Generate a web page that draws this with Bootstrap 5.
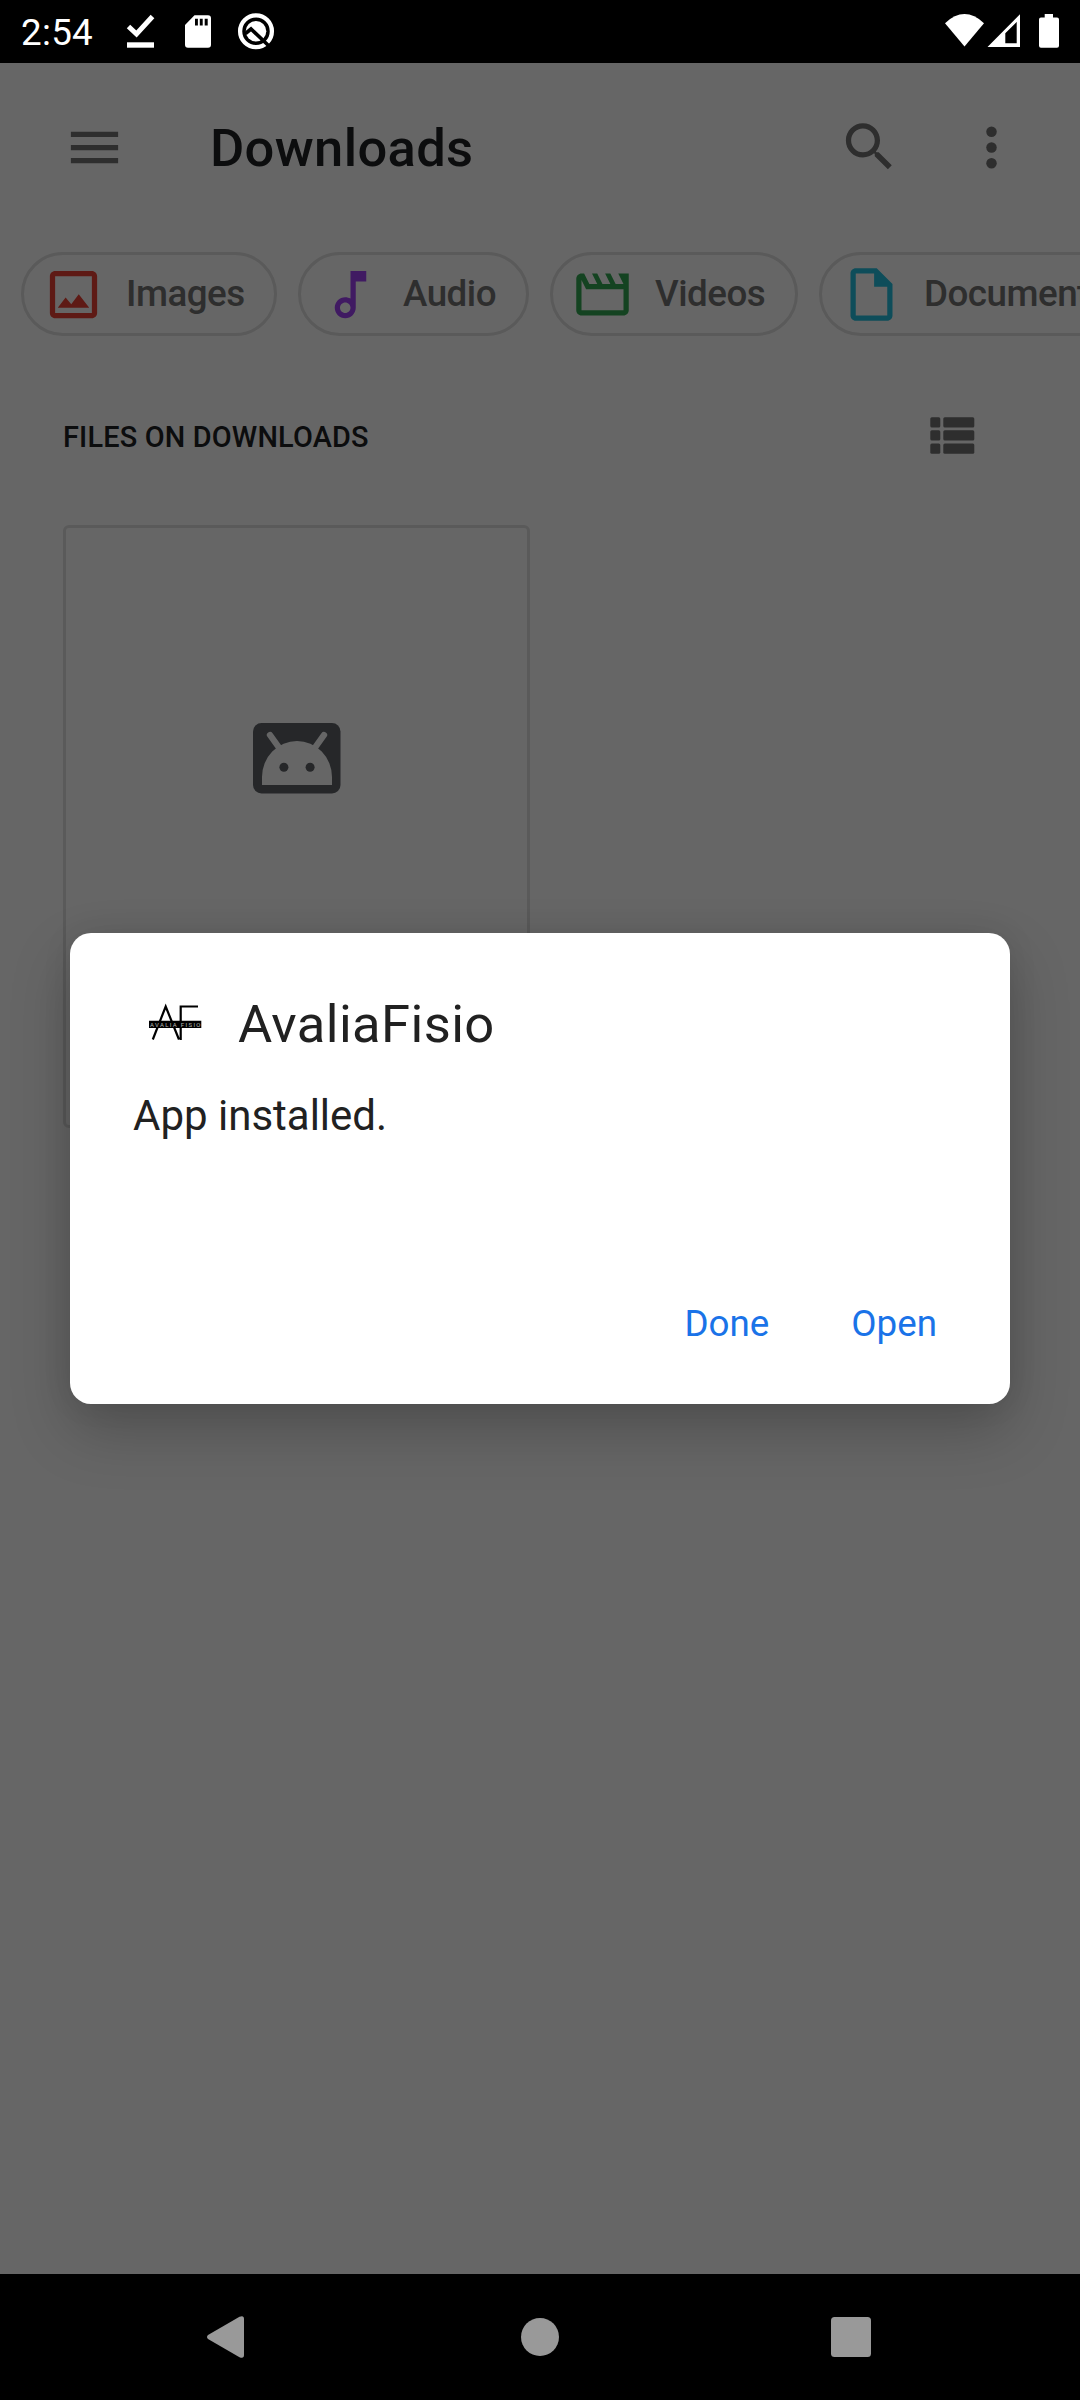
<!DOCTYPE html>
<html lang="en">
<head>
<meta charset="utf-8">
<meta name="viewport" content="width=device-width, initial-scale=1">
<title>Downloads</title>
<link href="https://cdn.jsdelivr.net/npm/bootstrap@5.3.0/dist/css/bootstrap.min.css" rel="stylesheet">
<style>
  body { font-family: Roboto, "Liberation Sans", sans-serif; width: 1080px; height: 2400px; overflow: hidden; color: #202124; line-height: 1; }
  svg { display: block; flex: none; }
  .status { height: 63px; padding: 0 21px; font-size: 36.75px; }
  .clock { padding-top: 4px; letter-spacing: .3px; }
  .notices { margin-left: 33px; }
  .softkeys { height: 126px; padding: 0 209px 0 207px; }
  .home-key { margin-left: 4px; }
  .toolbar { height: 168px; padding: 0 57px 0 63px; }
  .screen-title { font-size: 52.5px; font-weight: 500; margin: 0 0 0 84px; line-height: 1; padding-top: 3px; letter-spacing: .35px; }
  .ink { color: #737373; }
  .chips { padding: 21px 0 0 21px; gap: 21px; }
  .chip { height: 84px; border: 3px solid #e0e0e0; border-radius: 42px; padding: 0 18px; gap: 21px; font-size: 36.75px; font-weight: 500; letter-spacing: -.5px; white-space: nowrap; flex: none; }
  .section-head { height: 189px; padding: 9px 105px 0 63px; }
  .section-label { font-size: 28.875px; font-weight: 500; padding-top: 4px; letter-spacing: .18px; }
  .file-tile { width: 467px; height: 603px; margin-left: 63px; border: 3px solid #e0e0e0; border-radius: 6px; padding-top: 195px; }
  .scrim { top: 63px; bottom: 126px; background: rgba(0,0,0,.6); }
  .dialog-box { width: 940px; height: 471px; border-radius: 21px; padding: 63px 63px 0; margin-top: -1px; box-shadow: 0 26px 60px rgba(0,0,0,.22), 0 0 30px rgba(0,0,0,.08); }
  .dialog-title { font-size: 52.5px; gap: 21px; height: 54px; color: #212121; }
  .app-name { padding-top: 3px; letter-spacing: .4px; }
  .dialog-text { font-size: 42px; margin-top: 45px; color: #212121; }
  .dialog-actions { font-size: 36.75px; gap: 82px; padding: 0 10px 61px 0; }
  .dialog-actions .btn { color: #1a73e8; font-size: inherit; line-height: 1; }
</style>
</head>
<body class="bg-white d-flex flex-column position-relative">

<header class="status bg-black text-white d-flex align-items-center justify-content-between flex-shrink-0">
  <div class="d-flex align-items-center">
    <span class="clock">2:54</span>
    <svg class="notices" width="154" height="63" viewBox="126 0 154 63" fill="#fff">
      <path d="M128 27.500l8 7.500L152 17.500" transform="translate(.5 -1)" fill="none" stroke="#fff" stroke-width="5"/>
      <path d="M127 42.300h27v5.400h-27z"/>
      <path fill-rule="evenodd" d="M194.500 15.300H208a3 3 0 0 1 3 3V44.700a3 3 0 0 1-3 3H188a3 3 0 0 1-3-3V25zM195 18.700v6.700h2.900v-6.700zM199.800 18.700v6.700h2.900v-6.700zM204.700 18.700v6.700h3v-6.700z"/>
      <circle cx="256" cy="31.300" r="15.900" fill="none" stroke="#fff" stroke-width="4.300"/>
      <circle cx="256" cy="31.300" r="10.300"/>
      <path d="M245.500 33.500l5.500-4.500 19 18" fill="none" stroke="#000" stroke-width="3.600"/>
    </svg>
  </div>
  <svg width="115" height="63" viewBox="944 0 115 63" fill="#fff">
    <path d="M945 23.200Q964.500 5 984 23.200L964.500 46.500z"/>
    <path fill-rule="evenodd" d="M987.500 47H1020V14.300zM1005.300 33.300V43.300H1016.700V21.900z"/>
    <path d="M1044.700 14h8.300v3.500h4a2 2 0 0 1 2 2V45.700a2 2 0 0 1-2 2h-16a2 2 0 0 1-2-2V19.500a2 2 0 0 1 2-2h3.700z"/>
  </svg>
</header>

<main class="flex-grow-1 overflow-hidden">
  <nav class="toolbar d-flex align-items-center">
    <svg class="ink" width="63" height="63" viewBox="0 0 24 24" fill="currentColor"><path d="M3 18h18v-2H3v2zm0-5h18v-2H3v2zm0-7v2h18V6H3z"/></svg>
    <h1 class="screen-title">Downloads</h1>
    <div class="d-flex ms-auto ink" style="gap:59px">
      <svg width="63" height="63" viewBox="0 0.2 24 24" fill="currentColor"><path d="M15.500 14h-.79l-.28-.27C15.410 12.590 16 11.110 16 9.500 16 5.910 13.090 3 9.500 3S3 5.910 3 9.500 5.910 16 9.500 16c1.610 0 3.090-.59 4.230-1.570l.27.28v.79l5 4.990L20.490 19l-4.990-5zm-6 0C7.010 14 5 11.990 5 9.500S7.010 5 9.500 5 14 7.010 14 9.500 11.990 14 9.500 14z"/></svg>
      <svg width="63" height="63" viewBox="0 0 24 24" fill="currentColor"><circle cx="12" cy="6" r="2"/><circle cx="12" cy="12" r="2"/><circle cx="12" cy="18" r="2"/></svg>
    </div>
  </nav>

  <div class="chips d-flex ink">
    <div class="chip d-flex align-items-center" style="width:256px">
      <svg width="63" height="63" viewBox="0 0 24 24" fill="#ea4335"><path d="M19 5v14H5V5h14m0-2H5c-1.100 0-2 .9-2 2v14c0 1.100.9 2 2 2h14c1.100 0 2-.9 2-2V5c0-1.100-.9-2-2-2z"/><path d="M6 17l3-3.900 2.140 2.580L14 11.900 18 17z"/></svg>
      <span>Images</span>
    </div>
    <div class="chip d-flex align-items-center" style="width:231px">
      <svg width="63" height="63" viewBox="0 0 24 24" fill="#a142f4"><path d="M12 3v10.550c-.59-.34-1.270-.55-2-.55-2.210 0-4 1.790-4 4s1.790 4 4 4 4-1.790 4-4V7h4V3h-6zm-2 16c-1.100 0-2-.9-2-2s.9-2 2-2 2 .9 2 2-.9 2-2 2z"/></svg>
      <span>Audio</span>
    </div>
    <div class="chip d-flex align-items-center" style="width:248px">
      <svg width="63" height="63" viewBox="0 0 24 24" fill="#34a853"><path d="M4 6.470L5.760 10H20v8H4V6.470M22 4h-4l2 4h-3l-2-4h-2l2 4h-3l-2-4H8l2 4H7L5 4H4c-1.100 0-1.990.9-1.990 2L2 18c0 1.100.9 2 2 2h16c1.100 0 2-.9 2-2V4z"/></svg>
      <span>Videos</span>
    </div>
    <div class="chip d-flex align-items-center">
      <svg width="63" height="63" viewBox="0 0 24 24" fill="#24c1e0"><path fill-rule="evenodd" d="M14 2H6c-1.100 0-2 .9-2 2v16c0 1.100.9 2 2 2h12c1.100 0 2-.9 2-2V8l-6-6zM6 20V4h7v5h5v11H6z"/></svg>
      <span>Documents</span>
    </div>
  </div>

  <div class="section-head d-flex align-items-center justify-content-between">
    <span class="section-label">FILES ON DOWNLOADS</span>
    <svg class="ink" width="45" height="37" viewBox="0 0 45 37" fill="currentColor">
      <rect x=".3" y=".2" width="10" height="10.300" rx="1.500"/><rect x="13.300" y=".2" width="31" height="10.300" rx="1.500"/>
      <rect x=".3" y="13.300" width="10" height="10.300" rx="1.500"/><rect x="13.300" y="13.300" width="31" height="10.300" rx="1.500"/>
      <rect x=".3" y="26.500" width="10" height="10.300" rx="1.500"/><rect x="13.300" y="26.500" width="31" height="10.300" rx="1.500"/>
    </svg>
  </div>

  <div class="file-tile d-flex justify-content-center align-items-start">
    <svg width="88" height="71" viewBox="0 0 88 71">
      <rect width="87.500" height="70.500" rx="8.500" fill="#5f6368"/>
      <path d="M9 62V54a35 36 0 0 1 70 0v8z" fill="#fff"/>
      <path d="M17 12l10 14M71 12L61 26" stroke="#fff" stroke-width="6.300" stroke-linecap="round"/>
      <circle cx="30.900" cy="44.300" r="4.500" fill="#5f6368"/><circle cx="57.100" cy="44.300" r="4.500" fill="#5f6368"/>
    </svg>
  </div>
</main>

<footer class="softkeys bg-black d-flex align-items-center justify-content-between flex-shrink-0">
  <svg width="37" height="42" viewBox="0 0 37 42" fill="#999"><path d="M1 19L32.500.8Q37-1 37 3V39q0 4-4.500 2.200L1 23Q-1 21 1 19z"/></svg>
  <svg class="home-key" width="38" height="38" viewBox="0 0 38 38" fill="#999"><circle cx="19" cy="19" r="19"/></svg>
  <svg width="40" height="40" viewBox="0 0 40 40" fill="#999"><rect width="40" height="40" rx="3.500"/></svg>
</footer>

<div class="scrim position-absolute start-0 end-0 d-flex align-items-center justify-content-center">
  <section class="dialog-box bg-white d-flex flex-column" role="dialog" aria-labelledby="app-name">
    <div class="dialog-title d-flex align-items-center">
      <svg width="84" height="63" viewBox="133 991 84 63">
        <path d="M149 1020.700h52.300v7.300H149z"/>
        <path d="M152.800 1039.500L165.700 1006.500 179 1039.500M180.700 1040V1006.500H198" fill="none" stroke="#000" stroke-width="2.200"/>
        <text x="150" y="1026.700" font-size="6" fill="#fff" fill-opacity=".7" textLength="50.500" lengthAdjust="spacing" font-family="Roboto, sans-serif">AVALIA FISIO</text>
      </svg>
      <span class="app-name" id="app-name">AvaliaFisio</span>
    </div>
    <p class="dialog-text mb-0">App installed.</p>
    <div class="dialog-actions d-flex justify-content-end mt-auto">
      <button type="button" class="btn p-0 border-0">Done</button>
      <button type="button" class="btn p-0 border-0">Open</button>
    </div>
  </section>
</div>

<script src="https://cdn.jsdelivr.net/npm/bootstrap@5.3.0/dist/js/bootstrap.bundle.min.js"></script>
</body>
</html>
